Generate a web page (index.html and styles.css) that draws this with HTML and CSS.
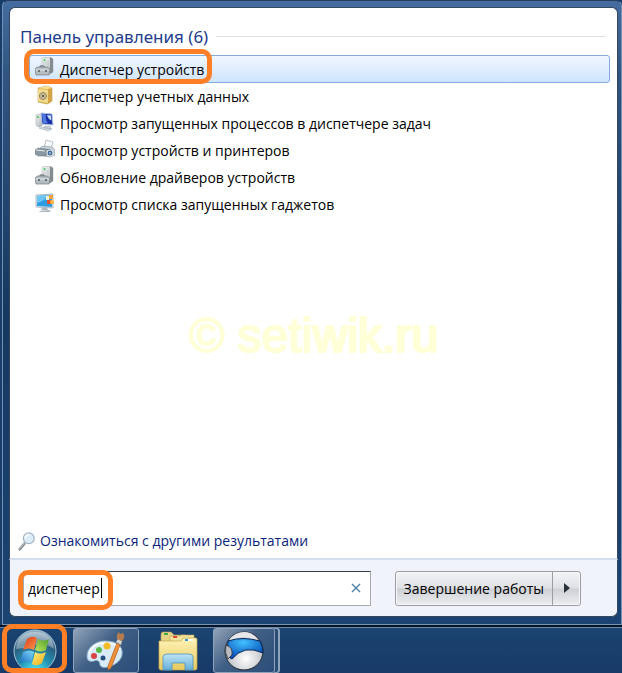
FILE: index.html
```html
<!DOCTYPE html>
<html lang="ru">
<head>
    <meta charset="UTF-8">
    <meta name="viewport" content="width=device-width, initial-scale=1.0">
    <title>Меню Пуск</title>
    <link rel="stylesheet" href="styles.css">
</head>
<body>
    <svg class="defs" width="0" height="0" aria-hidden="true">
        <defs>
            <linearGradient id="metal" x1="0" y1="0" x2="1" y2="1">
                <stop offset="0" stop-color="#fafbfb"/>
                <stop offset="1" stop-color="#a9afb3"/>
            </linearGradient>
            <symbol id="device" viewBox="0 0 20 20">
                <path d="M7 1l8-1 3 2v13l-3 2H7z" fill="url(#metal)" stroke="#a3a9ac" stroke-width=".5"/>
                <path d="M15 0l3 2v13l-3 2z" fill="#858c90"/>
                <path d="M8 5h6M8 7h6" stroke="#c2c8ca" stroke-width=".7"/>
                <circle cx="9.500" cy="3" r="1" fill="#35c45c"/>
                <path d="M5 11V9h4v2" fill="none" stroke="#596166"/>
                <path d="M0 12l2-2h10l3 2-1 6H1z" fill="#b4bdc2" stroke="#737c81" stroke-width=".7"/>
                <path d="M1 13h13" stroke="#e4e9eb"/>
                <path d="M4 13v2M11 13v2" stroke="#4d565b" stroke-width="1.500"/>
            </symbol>
        </defs>
    </svg>

    <main class="menu">
        <section class="results">
            <h1><span>Панель управления (6)</span></h1>
            <ul>
                <li>
                    <a href="#" class="item selected">
                        <svg viewBox="0 0 20 20"><use href="#device"/></svg>
                        <span>Диспетчер устройств</span>
                    </a>
                </li>
                <li>
                    <a href="#" class="item">
                        <svg viewBox="0 0 20 20">
                            <path d="M3 3l9-2 5 2v13l-5 3-9-2z" fill="#e5bd55" stroke="#a8842e" stroke-width=".5"/>
                            <path d="M3 3l9-2 5 2-4 1z" fill="#f8e39a"/>
                            <path d="M13 4l4-1v13l-4 3z" fill="#d3a548"/>
                            <path d="M3 4l10 1v13L3 16z" fill="#f1d98e"/>
                            <circle cx="8" cy="11" r="3.500" fill="#eee4c3" stroke="#8d7c56"/>
                            <path d="M8 8v6M5 11h6M6 9l4 4M10 9l-4 4" stroke="#8d7c56" stroke-width=".7"/>
                            <circle cx="8" cy="11" r="1" fill="#574a2e"/>
                        </svg>
                        <span>Диспетчер учетных данных</span>
                    </a>
                </li>
                <li>
                    <a href="#" class="item">
                        <svg viewBox="0 0 20 20">
                            <path d="M1 3l4-1 2 1v11l-4 1-2-2z" fill="url(#metal)" stroke="#929da5" stroke-width=".5"/>
                            <circle cx="3" cy="5" r="1" fill="#3bbd4d"/>
                            <path d="M6 1l11 1 1 11-11-1z" fill="#1732a8" stroke="#b6c5df"/>
                            <path d="M7 2l4 .5q-1 5 2 9L8 11z" fill="#4f7ae0"/>
                            <path d="M12 3l4 .5.5 5q-3-1-4.500-5.500z" fill="#c7dbfb"/>
                            <path d="M10 14l5 0 1 3-7-1zM4 16l6-1 7 2-4 2z" fill="#d3dae0" stroke="#9aa6b1" stroke-width=".5"/>
                        </svg>
                        <span>Просмотр запущенных процессов в диспетчере задач</span>
                    </a>
                </li>
                <li>
                    <a href="#" class="item">
                        <svg viewBox="0 0 20 20">
                            <path d="M11 1l7 2-2 8-7-2z" fill="#f9fbfc" stroke="#9ca9b3" stroke-width=".7"/>
                            <path d="M5 9l3-2 9 1 3 3v5l-5 2-10-2z" fill="#c8d2d8" stroke="#8d99a1" stroke-width=".6"/>
                            <path d="M9 10l7 1M10 15l6 1" stroke="#6e7b85"/>
                            <path d="M0 11l3-2 7 1 1 1v6l-8 0-3-2z" fill="#8b98a1" stroke="#6a7680" stroke-width=".5"/>
                            <path d="M1 11l9 1" stroke="#e6ecef"/>
                            <circle cx="15" cy="14" r="3" fill="#496c93" stroke="#d8e2e9"/>
                            <circle cx="15" cy="14" r="1" fill="#93c5ed"/>
                        </svg>
                        <span>Просмотр устройств и принтеров</span>
                    </a>
                </li>
                <li>
                    <a href="#" class="item">
                        <svg viewBox="0 0 20 20"><use href="#device"/></svg>
                        <span>Обновление драйверов устройств</span>
                    </a>
                </li>
                <li>
                    <a href="#" class="item">
                        <svg viewBox="0 0 20 20">
                            <path d="M1 2l17-1v14L1 14z" fill="#e7edf2" stroke="#8b9eae" stroke-width=".7"/>
                            <path d="M2 3l15-1v12L2 13z" fill="#2e9ce0"/>
                            <path d="M2 3l10-1q-1 6-10 8z" fill="#6cc4f4"/>
                            <path d="M11 3h3v4h-3z" fill="#f7f2cf"/>
                            <path d="M14 2h4v4h-4z" fill="#f0a63d"/>
                            <path d="M12 7h4v4h-4z" fill="#e3542d"/>
                            <circle cx="17" cy="9" r="2" fill="#f9b537"/>
                            <path d="M7 15h5l1 2H6zM4 18l10-1 2 1-2 1H5z" fill="#a8b7c1"/>
                        </svg>
                        <span>Просмотр списка запущенных гаджетов</span>
                    </a>
                </li>
            </ul>
            <div class="watermark">© seti<span>wik.ru</span></div>
            <a href="#" class="more">
                <svg viewBox="0 0 20 20">
                    <path d="M7 13l-5 6" stroke="#858d94" stroke-width="3" stroke-linecap="round"/>
                    <path d="M7 12l-5 6" stroke="#d3d8dc" stroke-linecap="round"/>
                    <circle cx="12" cy="7" r="6" fill="#dcecf9" stroke="#a3b4c5" stroke-width="1.300"/>
                    <path d="M8 7q0-4 4-4" fill="none" stroke="#fff" stroke-width="1.500"/>
                </svg>
                <span>Ознакомиться с другими результатами</span>
            </a>
        </section>

        <form class="bottom">
            <div class="search">
                <input type="text" value="диспетчер" aria-label="Найти программы и файлы">
                <span class="caret"></span>
                <button type="button" class="clear" aria-label="Очистить">
                    <svg viewBox="0 0 10 10"><path d="M1 1l8 8M9 1L1 9" stroke="#5484ae" stroke-width="1.500"/></svg>
                </button>
            </div>
            <div class="power">
                <button type="button" class="shutdown">Завершение работы</button>
                <button type="button" class="arrow" aria-label="Другие действия">
                    <svg viewBox="0 0 6 10"><path d="M0 0l6 5-6 5z" fill="#2c323a"/></svg>
                </button>
            </div>
        </form>
    </main>

    <nav class="taskbar">
        <button type="button" class="start" aria-label="Пуск">
            <svg viewBox="0 0 44 44">
                <defs>
                    <radialGradient id="orb" cx=".5" cy="1" r=".95">
                        <stop offset="0" stop-color="#58f0f5"/>
                        <stop offset=".4" stop-color="#2295b5"/>
                        <stop offset=".75" stop-color="#2c5b7b"/>
                        <stop offset="1" stop-color="#8eabc0"/>
                    </radialGradient>
                    <linearGradient id="red" x1="0" y1="0" x2="1" y2="1"><stop offset="0" stop-color="#d93614"/><stop offset="1" stop-color="#ff9b50"/></linearGradient>
                    <linearGradient id="green" x1="1" y1="0" x2="0" y2="1"><stop offset="0" stop-color="#4c9d2c"/><stop offset="1" stop-color="#c0e65c"/></linearGradient>
                    <linearGradient id="blue" x1="0" y1="1" x2="1" y2="0"><stop offset="0" stop-color="#176bc2"/><stop offset="1" stop-color="#86dcfa"/></linearGradient>
                    <linearGradient id="yellow" x1="1" y1="1" x2="0" y2="0"><stop offset="0" stop-color="#f5a712"/><stop offset="1" stop-color="#fff283"/></linearGradient>
                </defs>
                <circle cx="22" cy="22" r="21" fill="url(#orb)" stroke="#a6c5d6"/>
                <path d="M3 20Q5 3 22 3t19 17Q31 13 22 16T3 20z" fill="#fff" opacity=".35"/>
                <path d="M14 10q5-4 10-1l-3 12q-5-3-11 0z" fill="url(#red)"/>
                <path d="M25 10q5 3 11 0l-3 11q-5 3-11 0z" fill="url(#green)"/>
                <path d="M10 23q6-3 11 0l-3 11q-5-3-11 0z" fill="url(#blue)"/>
                <path d="M22 23q5 3 11 0l-4 11q-5 4-10 1z" fill="url(#yellow)"/>
            </svg>
        </button>
        <button type="button" class="task" aria-label="Paint">
            <svg viewBox="0 0 40 40">
                <path d="M19 10C9 10 1 17 1 25c0 5 3 6 7 5 4-2 6 1 6 4 1 3 6 3 11 1 8-3 12-9 11-15-1-7-8-10-17-10z" fill="#d9ebf8" stroke="#8fb3d0"/>
                <path d="M3 23Q6 12 19 12q11 0 15 6" fill="none" stroke="#fff" stroke-width="1.500"/>
                <circle cx="8" cy="25" r="3" fill="#d94343"/>
                <circle cx="13" cy="19" r="3" fill="#58b947"/>
                <circle cx="21" cy="15" r="3.500" fill="#f3bc29"/>
                <circle cx="17" cy="27" r="2.500" fill="#24507f"/>
                <path d="M31 12l3 2-9 23-3 2 0-4z" fill="#ee9038" stroke="#b65c1b" stroke-width=".7"/>
                <path d="M30 11l2-3 4 2-1 4z" fill="#d5d4cc"/>
                <path d="M31 8q-1-4 2-7l1 2 3-1q3 4-1 8z" fill="#b77c4d"/>
            </svg>
        </button>
        <button type="button" class="task flat" aria-label="Проводник">
            <svg viewBox="0 0 40 40">
                <defs>
                    <linearGradient id="folder" x1="0" y1="0" x2="0" y2="1"><stop offset="0" stop-color="#fff3b8"/><stop offset="1" stop-color="#e6c95e"/></linearGradient>
                    <linearGradient id="stand" x1="0" y1="0" x2="0" y2="1"><stop offset="0" stop-color="#bde4f4"/><stop offset="1" stop-color="#65aed8"/></linearGradient>
                </defs>
                <path d="M3 4q0-3 2-3h8l3 3h12v7H3z" fill="#e6d386" stroke="#b7a35e" stroke-width=".6"/>
                <path d="M6 3h4" stroke="#3daa4a" stroke-width="2"/>
                <path d="M12 5h10l2-1h12v12H12z" fill="#f4e59e" stroke="#b7a35e" stroke-width=".6"/>
                <path d="M15 6h4" stroke="#dd4737" stroke-width="2"/>
                <path d="M1 10h22l2-3h13q1 0 1 2v28q0 2-2 2H3q-2 0-2-2z" fill="url(#folder)" stroke="#c3a74d" stroke-width=".7"/>
                <path d="M27 9h8" stroke="#fff" stroke-width="2"/>
                <path d="M27 9h3" stroke="#3b94d2" stroke-width="2"/>
                <path d="M5 26q0-3 4-3h22q4 0 4 3v13h-8v-7H14v7H5z" fill="url(#stand)" stroke="#4d96bf" stroke-width=".8"/>
            </svg>
        </button>
        <button type="button" class="task stacked" aria-label="Браузер">
            <svg viewBox="0 0 40 40">
                <defs>
                    <radialGradient id="ball" cx=".55" cy=".7" r=".6"><stop offset="0" stop-color="#fff"/><stop offset="1" stop-color="#aeb2b8"/></radialGradient>
                    <radialGradient id="band" cx=".45" cy=".2" r=".7"><stop offset="0" stop-color="#43bfff"/><stop offset="1" stop-color="#0753bb"/></radialGradient>
                </defs>
                <circle cx="20" cy="20" r="19" fill="url(#ball)" stroke="#24292f"/>
                <path d="M4 10Q18 5 36 10q3 5 3 12Q20 13 8 28L3 25z" fill="url(#band)" stroke="#092657"/>
                <path d="M5 9Q11 1 20 1q9 0 14 8-15-5-29 0z" fill="#e5e7eb"/>
                <path d="M2 14q7 2 6 10l-4 4Q0 22 2 14z" fill="#b8bbc0" stroke="#252b33" stroke-width=".8"/>
            </svg>
        </button>
    </nav>
</body>
</html>
```
FILE: styles.css
```css
*,
*::after {
    box-sizing: border-box;
}

body {
    margin: 0;
    min-height: 100vh;
    display: flex;
    flex-direction: column;
    font-family: "Open Sans", "Noto Sans", sans-serif;
    font-size: 14px;
    color: #000;
    background: #183d6b;
}

a {
    color: inherit;
    text-decoration: none;
}

button {
    font: inherit;
    padding: 0;
    border: none;
    background: none;
}

.defs {
    position: absolute;
}

/* start menu frame */
.menu {
    flex: 1;
    display: flex;
    flex-direction: column;
    margin-left: 2px;
    padding: 6px 3px 7px 6px;
    border: 1px solid #7591b3;
    border-top-color: #283d5c;
    border-radius: 6px 6px 0 0;
    background: linear-gradient(#456c9f, #2f5580 12%, #153860 50%, #1b4473);
}

.results {
    position: relative;
    flex: 1;
    display: flex;
    flex-direction: column;
    padding: 15px 7px 4px 10px;
    border: 1px solid #34475f;
    border-bottom: 2px solid #d3dfee;
    border-radius: 6px 6px 0 0;
    background: #fff;
}

h1 {
    display: flex;
    align-items: center;
    gap: 8px;
    margin: 0 4px 5px 0;
    font-family: "Noto Sans", "Open Sans", sans-serif;
    font-size: 17px;
    line-height: 27px;
    font-weight: normal;
    color: #1e3c8c;
}

h1::after {
    content: "";
    flex: 1;
    height: 1px;
    background: #e2e2e2;
}

ul {
    margin: 0;
    padding: 0 0 0 9px;
    list-style: none;
}

.item {
    position: relative;
    display: flex;
    align-items: center;
    gap: 5px;
    height: 27px;
    padding-left: 6px;
}

.item svg {
    width: 20px;
    height: 20px;
    margin-top: -4px;
}

.selected {
    height: 28px;
    padding-left: 5px;
    border: 1px solid #84acdd;
    border-radius: 3px;
    background: linear-gradient(#f0f7ff, #cfe4fe);
}

/* orange marker frames */
.selected::after,
.search::after,
.start::after {
    content: "";
    position: absolute;
    border: 5px solid #ff7f27;
    border-radius: 10px;
    pointer-events: none;
}

.selected::after {
    top: -7px;
    left: -6px;
    width: 188px;
    height: 35px;
}

.watermark {
    position: absolute;
    top: 50%;
    left: 50%;
    transform: translate(-50%, -50%);
    padding-top: 106px;
    font-family: "Liberation Sans", Arial, sans-serif;
    font-size: 48px;
    line-height: 56px;
    white-space: nowrap;
    color: #ffffd8;
    -webkit-text-stroke: 2px #ffffd8;
}

.watermark span {
    text-shadow: 2px 0 #ffffd8;
}

.more {
    display: flex;
    align-items: center;
    gap: 4px;
    height: 27px;
    margin-top: auto;
    margin-left: -2px;
    color: #0b1f7c;
}

.more svg {
    width: 18px;
    height: 20px;
}

.bottom {
    display: flex;
    align-items: center;
    gap: 24px;
    height: 57px;
    padding: 0 36px 0 13px;
    border: 1px solid #34475f;
    border-top: none;
    border-radius: 0 0 6px 6px;
    background: #f0f3fb;
}

.search {
    position: relative;
    flex: 1;
    display: flex;
    align-items: center;
    height: 35px;
    border: 1px solid #a4a9b0;
    border-top-color: #343c46;
    background: #fff;
}

.search::after {
    top: -2px;
    left: -6px;
    width: 95px;
    height: 40px;
}

.search input {
    flex: 1;
    min-width: 0;
    height: 32px;
    padding: 0 4px;
    border: none;
    outline: none;
    font: inherit;
    background: none;
}

.caret {
    position: absolute;
    left: 77px;
    top: 6px;
    width: 1px;
    height: 20px;
    background: #000;
}

.clear {
    display: flex;
    padding: 0 9px;
}

.clear svg {
    width: 10px;
    height: 10px;
}

.power {
    display: flex;
    height: 35px;
    border: 1px solid #9b9da2;
    border-radius: 3px;
    background: linear-gradient(#f2f3f5, #dfe1e5 48%, #cdd0d5 52%, #eceef1);
    box-shadow: inset 0 0 0 1px #f7f8fa;
}

.shutdown {
    padding: 0 8px;
    white-space: nowrap;
}

.arrow {
    display: flex;
    align-items: center;
    justify-content: center;
    width: 28px;
    border-left: 1px solid #9b9da2;
}

.arrow svg {
    width: 6px;
    height: 10px;
}

/* taskbar */
.taskbar {
    display: flex;
    align-items: center;
    gap: 6px;
    height: 48px;
    padding: 1px 2px 0;
    border-top: 2px solid #071426;
    background: linear-gradient(#6d8cad 1px, #1b4470 1px, #173a69);
}

.start {
    position: relative;
    display: flex;
    align-items: center;
    justify-content: center;
    width: 65px;
    height: 45px;
}

.start svg {
    width: 44px;
    height: 44px;
}

.start::after {
    top: -4px;
    left: 0;
    width: 65px;
    height: 49px;
}

.task {
    display: flex;
    align-items: center;
    justify-content: center;
    width: 66px;
    height: 45px;
    border: 1px solid #8fa3bb;
    border-radius: 3px;
    background: linear-gradient(135deg, #91a3b8, #405f85 45%, #2a4d78);
}

.flat {
    border-color: transparent;
    background: none;
}

.stacked {
    width: 62px;
    margin-left: -4px;
    box-shadow: 4px 0 0 -1px #294b75, 5px 0 0 0 #8fa3bb;
}

.task svg {
    width: 40px;
    height: 40px;
}
```
